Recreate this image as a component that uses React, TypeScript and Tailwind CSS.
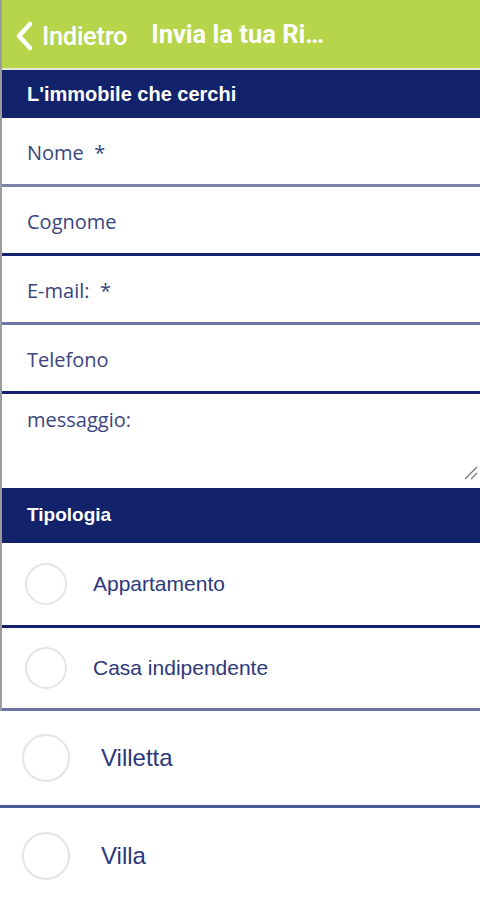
import React from 'react';

const fields = [
  { label: 'Nome  *', line: 'border-[#7a82a8]' },
  { label: 'Cognome', line: 'border-[#18236e]' },
  { label: 'E-mail:  *', line: 'border-[#6c76a2]' },
  { label: 'Telefono', line: 'border-[#16216c]' },
];

const types = [
  { label: 'Appartamento', line: 'border-[#17226d]' },
  { label: 'Casa indipendente', line: 'border-[#6a74a2]' },
];

function Radio({ big }: { big?: boolean }) {
  return (
    <span
      className={
        big
          ? 'block w-[48px] h-[48px] rounded-full border-2 border-[#e4e4e4] shrink-0'
          : 'block w-[42px] h-[42px] rounded-full border-2 border-[#e4e4e4] shrink-0'
      }
    />
  );
}

function SectionTitle({ children, h, size }: { children: React.ReactNode; h: string; size: string }) {
  return (
    <div
      className={`${h} ${size} bg-[#13236b] flex items-center pl-[25px] text-white font-bold font-['Liberation_Sans',Arial,sans-serif]`}
    >
      {children}
    </div>
  );
}

export default function App() {
  return (
    <div className="w-[480px] h-[900px] overflow-hidden bg-white">
      <div className="border-l-2 border-[#9c9c9c]">
        <header className="h-[68px] bg-[#b6d54b] flex items-center text-white font-['Roboto',sans-serif]">
          <svg width="22" height="30" viewBox="0 0 22 30" className="ml-[11px] mt-[4px]">
            <polyline
              points="17,3 6,15 17,27"
              fill="none"
              stroke="white"
              strokeWidth="4.5"
              strokeLinecap="round"
              strokeLinejoin="round"
            />
          </svg>
          <span className="ml-[7px] mt-[4px] text-[25.5px] font-medium tracking-[-0.3px]">Indietro</span>
          <span className="ml-[24px] text-[25.5px] font-bold tracking-[0px]">Invia la tua Ri…</span>
        </header>
        <div className="border-t-2 border-[#e4ead8]">
          <SectionTitle h="h-[48px]" size="text-[20px]">
            L'immobile che cerchi
          </SectionTitle>
        </div>

        {fields.map((f) => (
          <div
            key={f.label}
            className={`h-[69px] border-b-[3px] ${f.line} flex items-center pl-[25px] pt-[4px] text-[20px] text-[#3a4580] font-['Open_Sans',sans-serif] whitespace-pre`}
          >
            {f.label}
          </div>
        ))}

        <div className="relative h-[94px] pl-[25px] pt-[11px] text-[20px] text-[#3a4580] font-['Open_Sans',sans-serif]">
          messaggio:
          <svg width="16" height="16" viewBox="0 0 16 16" className="absolute right-[2px] bottom-[8px]">
            <line x1="3" y1="15" x2="15" y2="3" stroke="#777" strokeWidth="1.2" />
            <line x1="9" y1="15" x2="15" y2="9" stroke="#777" strokeWidth="1.2" />
          </svg>
        </div>

        <SectionTitle h="h-[55px]" size="text-[19px]">
          Tipologia
        </SectionTitle>

        {types.map((t, i) => (
          <div
            key={t.label}
            className={`${i === 0 ? 'h-[85px]' : 'h-[83px]'} border-b-[3px] ${t.line} flex items-center pl-[23px] gap-[26px] text-[21px] text-[#2c387a] font-['Liberation_Sans',Arial,sans-serif]`}
          >
            <Radio />
            <span>{t.label}</span>
          </div>
        ))}
      </div>

      <div className="h-[97px] border-b-[3px] border-[#4b5a98] flex items-center pl-[22px] gap-[31px] text-[24px] text-[#2c387a] font-['Liberation_Sans',Arial,sans-serif]">
        <Radio big />
        <span>Villetta</span>
      </div>
      <div className="h-[95px] flex items-center pl-[22px] gap-[31px] text-[24px] text-[#2c387a] font-['Liberation_Sans',Arial,sans-serif]">
        <Radio big />
        <span>Villa</span>
      </div>
    </div>
  );
}
